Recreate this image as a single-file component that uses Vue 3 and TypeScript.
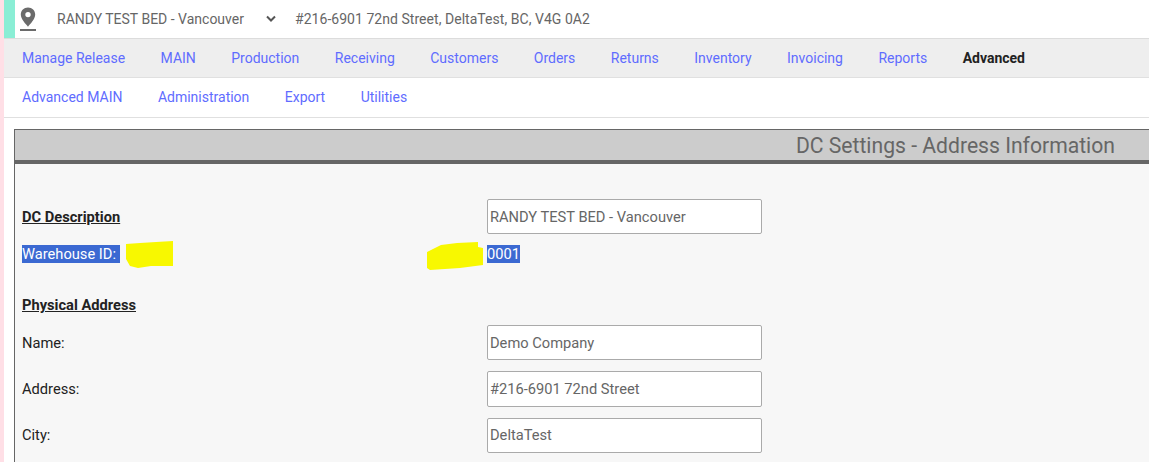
<script setup lang="ts">
const mainNav: string[] = ['Manage Release', 'MAIN', 'Production', 'Receiving', 'Customers', 'Orders', 'Returns', 'Inventory', 'Invoicing', 'Reports', 'Advanced']
const subNav: string[] = ['Advanced MAIN', 'Administration', 'Export', 'Utilities']
const fields = [
  { label: 'Name:', value: 'Demo Company' },
  { label: 'Address:', value: '#216-6901 72nd Street' },
  { label: 'City:', value: 'DeltaTest' },
]
</script>

<template>
  <div class="page">
    <div class="content">
      <header class="topbar">
        <div class="accent"></div>
        <svg class="pin" width="16" height="24" viewBox="0 0 16 24">
          <path fill="#6b6b6b" fill-rule="evenodd" d="M8 0.5C3.9 0.5 0.8 3.6 0.8 7.6c0 4.6 5 9.600 7.200 12.100 2.200-2.500 7.200-7.500 7.200-12.100C15.200 3.600 12.100 0.500 8 0.500zM8 10.300a2.700 2.700 0 1 1 0-5.400 2.700 2.700 0 0 1 0 5.400z" />
          <rect x="0" y="22" width="16" height="2" fill="#6b6b6b" />
        </svg>
        <span class="site">RANDY TEST BED - Vancouver</span>
        <svg class="chevron" width="10" height="8" viewBox="0 0 10 8">
          <path d="M1 1.500 L5 5.500 L9 1.500" fill="none" stroke="#555" stroke-width="2" />
        </svg>
        <span class="addr">#216-6901 72nd Street, DeltaTest, BC, V4G 0A2</span>
      </header>
      <nav class="nav main-nav">
        <a v-for="item in mainNav" :key="item" :class="{ active: item === 'Advanced' }">{{ item }}</a>
      </nav>
      <nav class="nav sub-nav">
        <a v-for="item in subNav" :key="item">{{ item }}</a>
      </nav>
      <section class="panel">
        <div class="panel-head"><h1>DC Settings - Address Information</h1></div>
        <div class="panel-body">
          <div class="row first">
            <strong class="head-label">DC Description</strong>
            <input class="field" value="RANDY TEST BED - Vancouver" readonly />
          </div>
          <div class="row wh">
            <span class="label-cell">
              <span class="selected">Warehouse ID:&nbsp;</span>
              <svg class="scribble s1" width="48" height="28" viewBox="0 0 48 28">
                <path fill="#f8f800" d="M0 3 L14 2 L30 1 L47 0 L47 25 L25 25 L12 27 L4 25 L0 18 Z" />
              </svg>
              <svg class="scribble s2" width="57" height="30" viewBox="0 0 57 30">
                <path fill="#f8f800" d="M0 11 L6 8 L14 4 L30 2 L51 1 L51 6 L56 7 L56 24 L33 27 L3 29 L0 27 Z" />
              </svg>
            </span>
            <span class="value"><span class="selected">0001</span></span>
          </div>
          <div class="row phys">
            <strong class="head-label">Physical Address</strong>
          </div>
          <div v-for="f in fields" :key="f.label" class="row data">
            <span>{{ f.label }}</span>
            <input class="field tall" :value="f.value" readonly />
          </div>
        </div>
      </section>
    </div>
  </div>
</template>

<style>
html, body { margin: 0; padding: 0; background: #fff; overflow: hidden; }
</style>

<style scoped>
.page {
  width: 1149px;
  height: 462px;
  overflow: hidden;
  background: #ffdfe6;
  padding-left: 4px;
  box-sizing: border-box;
  font-family: Roboto, "Liberation Sans", sans-serif;
  font-size: 14px;
  color: #222;
}
.content { background: #fff; height: 462px; }
.topbar {
  height: 38px;
  display: flex;
  align-items: center;
  background: #fff;
  border-bottom: 1px solid #dcdcdc;
  color: #666;
}
.accent { width: 11px; height: 38px; background: #8aeed5; flex: none; }
.pin { margin-left: 5px; flex: none; }
.site { margin-left: 21px; width: 188px; white-space: nowrap; }
.chevron { margin-left: 21px; flex: none; }
.addr { margin-left: 19px; letter-spacing: 0.04px; }
.nav {
  display: flex;
  gap: 35.45px;
  padding-left: 18px;
  align-items: center;
  border-bottom: 1px solid #e0e0e0;
  color: #5f6cff;
}
.main-nav { height: 38px; background: #eee; }
.sub-nav { height: 38px; padding-bottom: 1px; background: #fff; }
.active { color: #222; font-weight: 700; }
.panel {
  margin: 11px 0 0 10px;
  border-left: 1px solid #666;
  border-top: 1px solid #666;
  background: #f7f7f7;
}
.panel-head {
  height: 30px;
  background: #ccc;
  border-bottom: 4px solid #666;
  display: flex;
  align-items: center;
  justify-content: flex-end;
  padding-right: 34px;
}
.panel-head h1 {
  margin: 0;
  font-size: 21.15px;
  font-weight: 400;
  color: #666;
}
.panel-body { padding: 35px 0 0 7px; height: 300px; font-size: 14.67px; }
.row {
  display: grid;
  grid-template-columns: 465px 275px;
  align-items: center;
}
.head-label { font-weight: 700; text-decoration: underline; color: #222; }
.first { height: 35px; }
.wh { height: 18px; margin-top: 11px; color: #fff; }
.phys { height: 18px; margin-top: 33px; margin-bottom: 11px; }
.data { margin-bottom: 11px; }
.label-cell { position: relative; display: block; height: 18px; line-height: 18px; }
.value { line-height: 18px; }
.selected { background: #3b69d2; color: #fff; display: inline-block; height: 18px; line-height: 18px; }
.scribble { position: absolute; }
.s1 { left: 104px; top: -4px; }
.s2 { left: 405px; top: -4px; }
.field {
  box-sizing: border-box;
  width: 275px;
  height: 35px;
  border: 1px solid #aaa;
  border-radius: 2px;
  background: #fff;
  padding: 0 2px;
  font: 14.67px Roboto, "Liberation Sans", sans-serif;
  color: #666;
  outline: none;
}
.tall { height: 35.4px; }
</style>
